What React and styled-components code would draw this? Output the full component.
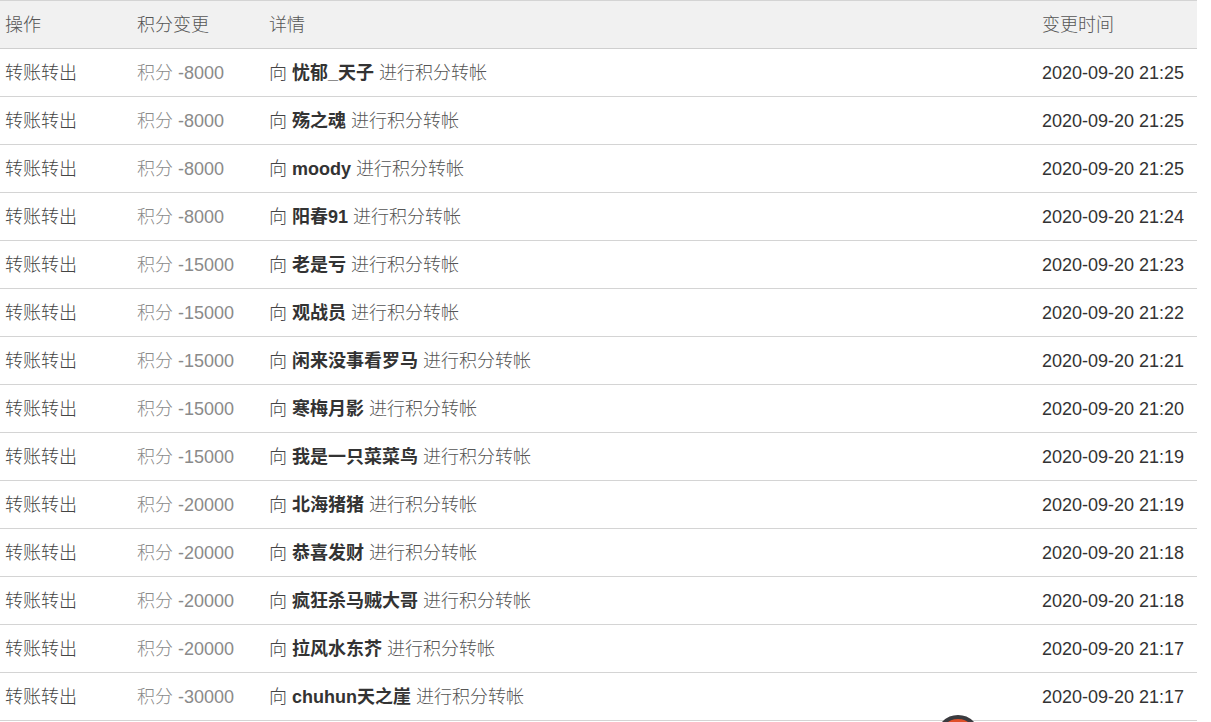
import styled, { createGlobalStyle } from 'styled-components'

const GlobalStyle = createGlobalStyle`
  html, body {
    margin: 0;
    padding: 0;
    background: #fff;
  }
  body {
    font-family: "Liberation Sans", "Noto Sans CJK SC", sans-serif;
    font-size: 18px;
    font-weight: 300;
  }
`

const Table = styled.table`
  width: 1197px;
  border-collapse: collapse;
  table-layout: fixed;
  border-top: 1px solid #d4d4d4;
`

const Col = styled.col`
  width: ${p => p.$w}px;
`

const HeadRow = styled.tr`
  background: #f1f1f1;
`

const Th = styled.th`
  height: 47px;
  padding: 0 0 0 5px;
  text-align: left;
  font-weight: 300;
  color: #555;
  border-bottom: 1px solid #cfcfcf;
  line-height: 20px;
`

const Row = styled.tr`
  border-bottom: 1px solid #d4d4d4;
`

const Td = styled.td`
  height: 47px;
  padding: 0 0 0 5px;
  color: ${p => p.$color || '#444'};
  white-space: nowrap;
  line-height: 20px;
`

const Name = styled.b`
  color: #333;
  font-weight: bold;
`

const Rest = styled.span`
  color: #555;
`

const FloatBtn = styled.div`
  position: fixed;
  left: 936px;
  top: 715px;
  width: 44px;
  height: 44px;
  border-radius: 50%;
  background: #e0502a;
  border: 4px solid #3b3b3f;
  box-sizing: border-box;
`

const rows = [
  ['-8000', '忧郁_天子', '21:25'],
  ['-8000', '殇之魂', '21:25'],
  ['-8000', 'moody', '21:25'],
  ['-8000', '阳春91', '21:24'],
  ['-15000', '老是亏', '21:23'],
  ['-15000', '观战员', '21:22'],
  ['-15000', '闲来没事看罗马', '21:21'],
  ['-15000', '寒梅月影', '21:20'],
  ['-15000', '我是一只菜菜鸟', '21:19'],
  ['-20000', '北海猪猪', '21:19'],
  ['-20000', '恭喜发财', '21:18'],
  ['-20000', '疯狂杀马贼大哥', '21:18'],
  ['-20000', '拉风水东芥', '21:17'],
  ['-30000', 'chuhun天之崖', '21:17'],
]

export default function App() {
  return (
    <>
      <GlobalStyle />
      <Table>
        <colgroup>
          <Col $w={132} />
          <Col $w={132} />
          <Col $w={773} />
          <Col $w={160} />
        </colgroup>
        <thead>
          <HeadRow>
            <Th>操作</Th>
            <Th>积分变更</Th>
            <Th>详情</Th>
            <Th>变更时间</Th>
          </HeadRow>
        </thead>
        <tbody>
          {rows.map(([amt, name, time], i) => (
            <Row key={i}>
              <Td>转账转出</Td>
              <Td $color="#8a8a8a">积分 {amt}</Td>
              <Td $color="#444">
                向 <Name>{name}</Name> <Rest>进行积分转帐</Rest>
              </Td>
              <Td $color="#333">2020-09-20 {time}</Td>
            </Row>
          ))}
        </tbody>
      </Table>
      <FloatBtn />
    </>
  )
}
